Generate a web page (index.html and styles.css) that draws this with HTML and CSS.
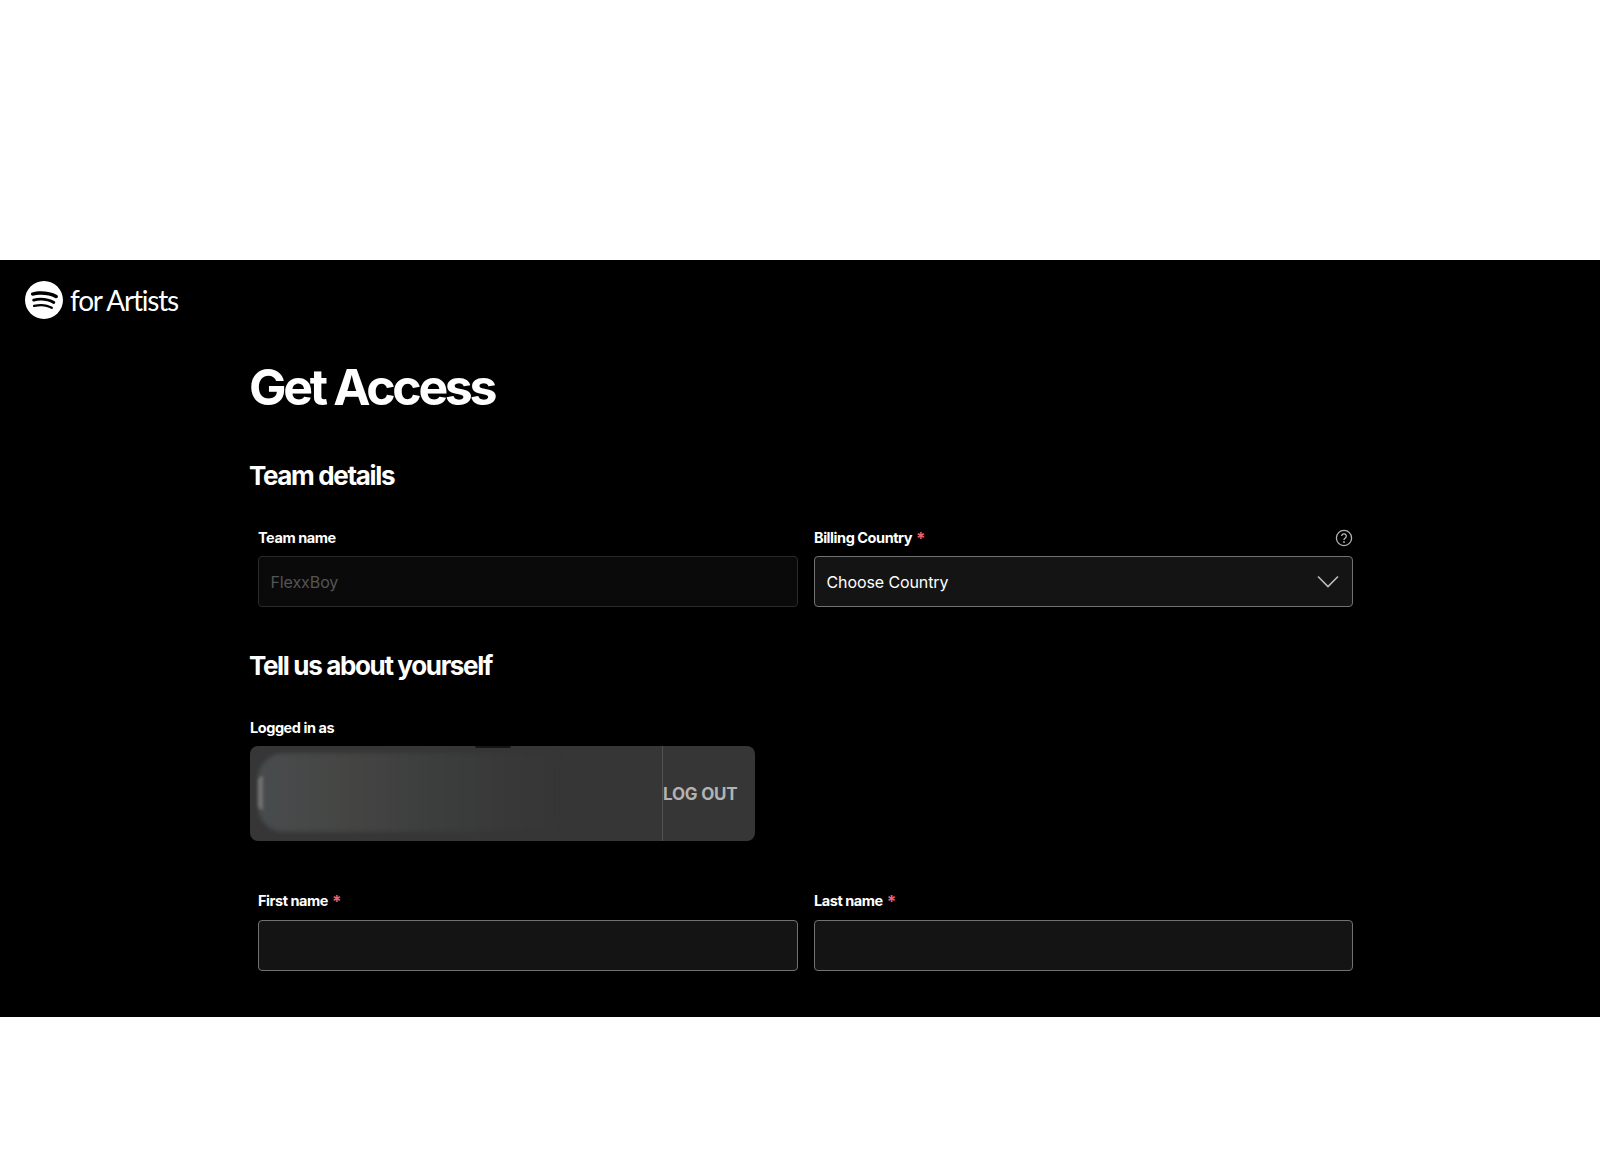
FILE: index.html
```html
<!DOCTYPE html>
<html lang="en">
<head>
<meta charset="utf-8">
<title>Get Access - Spotify for Artists</title>
<link rel="stylesheet" href="styles.css">
</head>
<body>
<div class="screen">
  <header class="brand">
    <svg class="brand-mark" viewBox="0 0 24 24" aria-hidden="true"><path d="M12 0C5.4 0 0 5.4 0 12s5.4 12 12 12 12-5.4 12-12S18.66 0 12 0zm5.521 17.34c-.24.359-.66.48-1.021.24-2.82-1.74-6.36-2.101-10.561-1.141-.418.122-.779-.179-.899-.539-.12-.421.18-.78.54-.9 4.56-1.021 8.52-.6 11.64 1.32.42.18.479.659.301 1.02zm1.44-3.3c-.301.42-.841.6-1.262.3-3.239-1.98-8.159-2.58-11.939-1.38-.479.12-1.02-.12-1.14-.6-.12-.48.12-1.021.6-1.141C9.6 9.9 15 10.561 18.72 12.84c.361.181.54.78.241 1.2zm.12-3.36C15.24 8.4 8.82 8.16 5.16 9.301c-.6.179-1.2-.181-1.38-.721-.18-.601.18-1.2.72-1.381 4.26-1.26 11.28-1.02 15.721 1.621.539.3.719 1.02.419 1.56-.299.421-1.02.599-1.559.3z"/></svg>
    <span class="brand-text">for Artists</span>
  </header>
  <main class="content">
    <h1 class="title">Get Access</h1>
    <h2 class="section-title">Team details</h2>
    <div class="fields fields-team">
      <div class="field">
        <div class="label-row"><label class="label">Team name</label></div>
        <div class="box box-disabled">FlexxBoy</div>
      </div>
      <div class="field">
        <div class="label-row">
          <label class="label">Billing Country <span class="req">*</span></label>
          <svg class="help" viewBox="0 0 18 18" aria-hidden="true"><circle cx="9" cy="9" r="7.6"/><path d="M6.7 7.1a2.3 2.3 0 1 1 3.5 2c-.8.5-1.2.9-1.2 1.8"/><circle class="help-dot" cx="9" cy="13" r=".9"/></svg>
        </div>
        <div class="box box-select">
          <span>Choose Country</span>
          <svg class="chevron" viewBox="0 0 22 13" aria-hidden="true"><path d="M1 1.5l10 10 10-10"/></svg>
        </div>
      </div>
    </div>
    <h2 class="section-title section-about">Tell us about yourself</h2>
    <div class="label logged-label">Logged in as</div>
    <div class="account">
      <div class="account-info">
        <div class="smudge"></div>
        <div class="smudge-edge"></div>
        <div class="smudge-tick"></div>
      </div>
      <div class="logout">LOG OUT</div>
    </div>
    <div class="fields fields-name">
      <div class="field">
        <div class="label-row"><label class="label">First name <span class="req">*</span></label></div>
        <div class="box"></div>
      </div>
      <div class="field">
        <div class="label-row"><label class="label">Last name <span class="req">*</span></label></div>
        <div class="box"></div>
      </div>
    </div>
  </main>
</div>
</body>
</html>
```
FILE: styles.css
```css
* { box-sizing: border-box; }
html, body { margin: 0; padding: 0; background: #fff; }
body { height: 1173px; overflow: hidden; padding-top: 260px; font-family: Inter, "Liberation Sans", sans-serif; }
.screen { height: 757px; background: #000; color: #fff; overflow: hidden; }
.brand { display: flex; align-items: center; gap: 7px; padding: 20px 0 0 25px; height: 59px; }
.brand-mark { width: 38px; height: 38px; fill: #fff; flex: none; }
.brand-text { font-family: Lato, Inter, sans-serif; font-size: 28px; font-weight: 400; letter-spacing: -1.2px; line-height: 38px; }
.content { width: 1103px; margin-left: 250px; }
.title { margin: 38px 0 0 -1px; font-size: 50px; line-height: 60px; font-weight: 700; letter-spacing: -3.3px; }
.section-title { margin: 0 0 0 -1px; font-size: 26px; line-height: 30px; font-weight: 700; letter-spacing: -1.35px; }
.title + .section-title { margin-top: 44px; }
.fields { display: grid; grid-template-columns: 540px 539px; column-gap: 16px; padding-left: 8px; }
.fields-team { margin-top: 36px; }
.fields-name { margin-top: 49px; }
.label-row { display: flex; justify-content: space-between; align-items: center; height: 22px; margin-bottom: 8px; }
.fields-team .label-row { margin-bottom: 7px; }
.label { font-size: 14.5px; line-height: 22px; font-weight: 700; letter-spacing: -0.45px; }
.req { position: relative; top: 2px; color: #f15e6c; font-size: 17px; line-height: 0; margin-left: 1px; }
.help { width: 18px; height: 18px; fill: none; stroke: #b3b3b3; stroke-width: 1.3; }
.help-dot { fill: #b3b3b3; stroke: none; }
.box { height: 51px; border: 1px solid #727272; border-radius: 4px; background: #141414; padding: 0 12px 0 11.5px; display: flex; align-items: center; justify-content: space-between; font-size: 16px; letter-spacing: -0.1px; color: #fff; }
.box-disabled { border-color: #292929; background: #0a0a0a; color: #555; }
.chevron { width: 22px; height: 13px; fill: none; stroke: #bdbdbd; stroke-width: 1.6; margin-right: 1px; }
.section-about { margin-top: 44px; }
.logged-label { display: block; margin-top: 36px; margin-bottom: 7px; }
.account { display: flex; width: 505px; height: 95px; border-radius: 8px; background: #363636; overflow: hidden; }
.account-info { position: relative; flex: 1; border-right: 1px solid #515151; overflow: hidden; }
.smudge { position: absolute; left: 8px; top: 7px; width: 300px; height: 79px; border-radius: 26px 8px 8px 26px; background: linear-gradient(90deg, #494c4e 0%, #454644 28%, #3d3e3e 55%, #383838 85%, #363636 100%); filter: blur(2px); }
.smudge-edge { position: absolute; left: 8px; top: 30px; width: 5px; height: 34px; border-radius: 5px 0 0 5px; background: #707070; filter: blur(1.5px); }
.smudge-tick { position: absolute; left: 225px; top: 0; width: 36px; height: 2px; border-radius: 0 0 6px 6px; background: #151515; filter: blur(.6px); }
.logout { width: 92px; display: flex; align-items: center; font-size: 17px; font-weight: 700; letter-spacing: -0.2px; color: #b3b3b3; }
```
